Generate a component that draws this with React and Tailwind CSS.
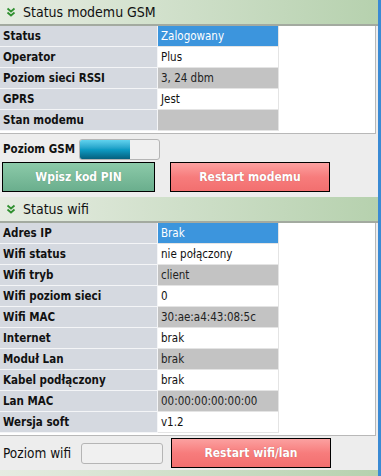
import React from "react";

const font = {fontFamily: "'DejaVu Sans Condensed', 'Liberation Sans', sans-serif"};

const Chevrons = () => (
    <svg width="10" height="10" viewBox="0 0 10 10" fill="none">
        <path d="M1.5 1.5L5 4.5L8.5 1.5" stroke="#2f8f2f" strokeWidth="1.8"/>
        <path d="M1.5 5.5L5 8.5L8.5 5.5" stroke="#2f8f2f" strokeWidth="1.8"/>
    </svg>
);

const Header = ({title}) => (
    <div className="shrink-0 h-[26px] flex items-center gap-[7px] pl-[6px] bg-gradient-to-r from-[#e6ece2] to-[#b6d1ae] border-b-2 border-[#a3aaa0]">
        <Chevrons/>
        <span className="text-[14px] text-[#111]">{title}</span>
    </div>
);

const valueBg = {
    blue: "bg-[#3c95dd] text-white",
    white: "bg-white text-[#111]",
    grey: "bg-[#c3c3c3] text-[#222]",
};

const Row = ({label, value, tone}) => (
    <div className="flex h-[21px]">
        <div className="w-[158px] bg-[#d5d9e0] border-b border-r border-[#f4f5f7] pl-[3px] pt-[1px] flex items-center text-[11.5px] font-bold text-[#111]">
            {label}
        </div>
        <div className={`w-[121px] border-b border-r border-[#e4e4e4] pl-[3px] pt-[1px] flex items-center text-[11.5px] ${valueBg[tone]}`}>
            {value}
        </div>
    </div>
);

const Table = ({rows}) => (
    <div className="shrink-0 bg-white border-r border-b border-[#b8b8b8] pb-[2px] mr-[2px]">
        {rows.map((r) => <Row key={r[0]} label={r[0]} value={r[1]} tone={r[2]}/>)}
    </div>
);

const Button = ({children, tone, className}) => (
    <div className={`shrink-0 h-[30px] border border-black flex items-center justify-center text-[12px] font-bold text-white [text-shadow:0_0_1px_rgba(0,0,0,0.25)] ${tone === "green"
        ? "bg-gradient-to-b from-[#8ccaa9] to-[#6aae8d]"
        : "bg-gradient-to-b from-[#fba0a0] via-[#f77c7c] to-[#f26f6f]"} ${className}`}>
        {children}
    </div>
);

const gsmRows = [
    ["Status", "Zalogowany", "blue"],
    ["Operator", "Plus", "white"],
    ["Poziom sieci RSSI", "3, 24 dbm", "grey"],
    ["GPRS", "Jest", "white"],
    ["Stan modemu", "", "grey"],
];

const wifiRows = [
    ["Adres IP", "Brak", "blue"],
    ["Wifi status", "nie połączony", "white"],
    ["Wifi tryb", "client", "grey"],
    ["Wifi poziom sieci", "0", "white"],
    ["Wifi MAC", "30:ae:a4:43:08:5c", "grey"],
    ["Internet", "brak", "white"],
    ["Moduł Lan", "brak", "grey"],
    ["Kabel podłączony", "brak", "white"],
    ["Lan MAC", "00:00:00:00:00:00", "grey"],
    ["Wersja soft", "v1.2", "white"],
];

export default function App() {
    return (
        <div className="w-[381px] h-[476px] overflow-hidden flex bg-[#ededed]" style={font}>
            <div className="w-[378px] flex flex-col">
                <Header title="Status modemu GSM"/>
                <Table rows={gsmRows}/>
                <div className="shrink-0 flex items-center pl-[3px] mt-[5px] h-[21px]">
                    <span className="w-[76px] whitespace-nowrap text-[11.5px] font-bold text-[#111]">Poziom GSM</span>
                    <div className="w-[81px] h-[21px] rounded-[3px] border border-[#b5b5b5] bg-[#f0f0f0] overflow-hidden">
                        <div className="w-[50px] h-full bg-gradient-to-b from-[#5fd3ef] via-[#0f9cc4] to-[#05607e]"/>
                    </div>
                </div>
                <div className="shrink-0 flex gap-[15px] pl-[2px] mt-[2px]">
                    <Button tone="green" className="w-[153px]">Wpisz kod PIN</Button>
                    <Button tone="red" className="w-[160px]">Restart modemu</Button>
                </div>
                <div className="shrink-0 mt-[5px]">
                    <Header title="Status wifi"/>
                </div>
                <Table rows={wifiRows}/>
                <div className="shrink-0 flex items-center pl-[3px] mt-[2px] h-[30px]">
                    <span className="w-[78px] whitespace-nowrap text-[13.5px] text-[#111]">Poziom wifi</span>
                    <div className="w-[82px] h-[21px] rounded-[3px] border border-[#b5b5b5] bg-[#f0f0f0]"/>
                    <Button tone="red" className="w-[160px] ml-[8px]">Restart wifi/lan</Button>
                </div>
                <div className="shrink-0 mt-[2px]">
                    <Header title=""/>
                </div>
            </div>
            <div className="w-[3px] bg-[#3a8ad4]"/>
        </div>
    );
}
